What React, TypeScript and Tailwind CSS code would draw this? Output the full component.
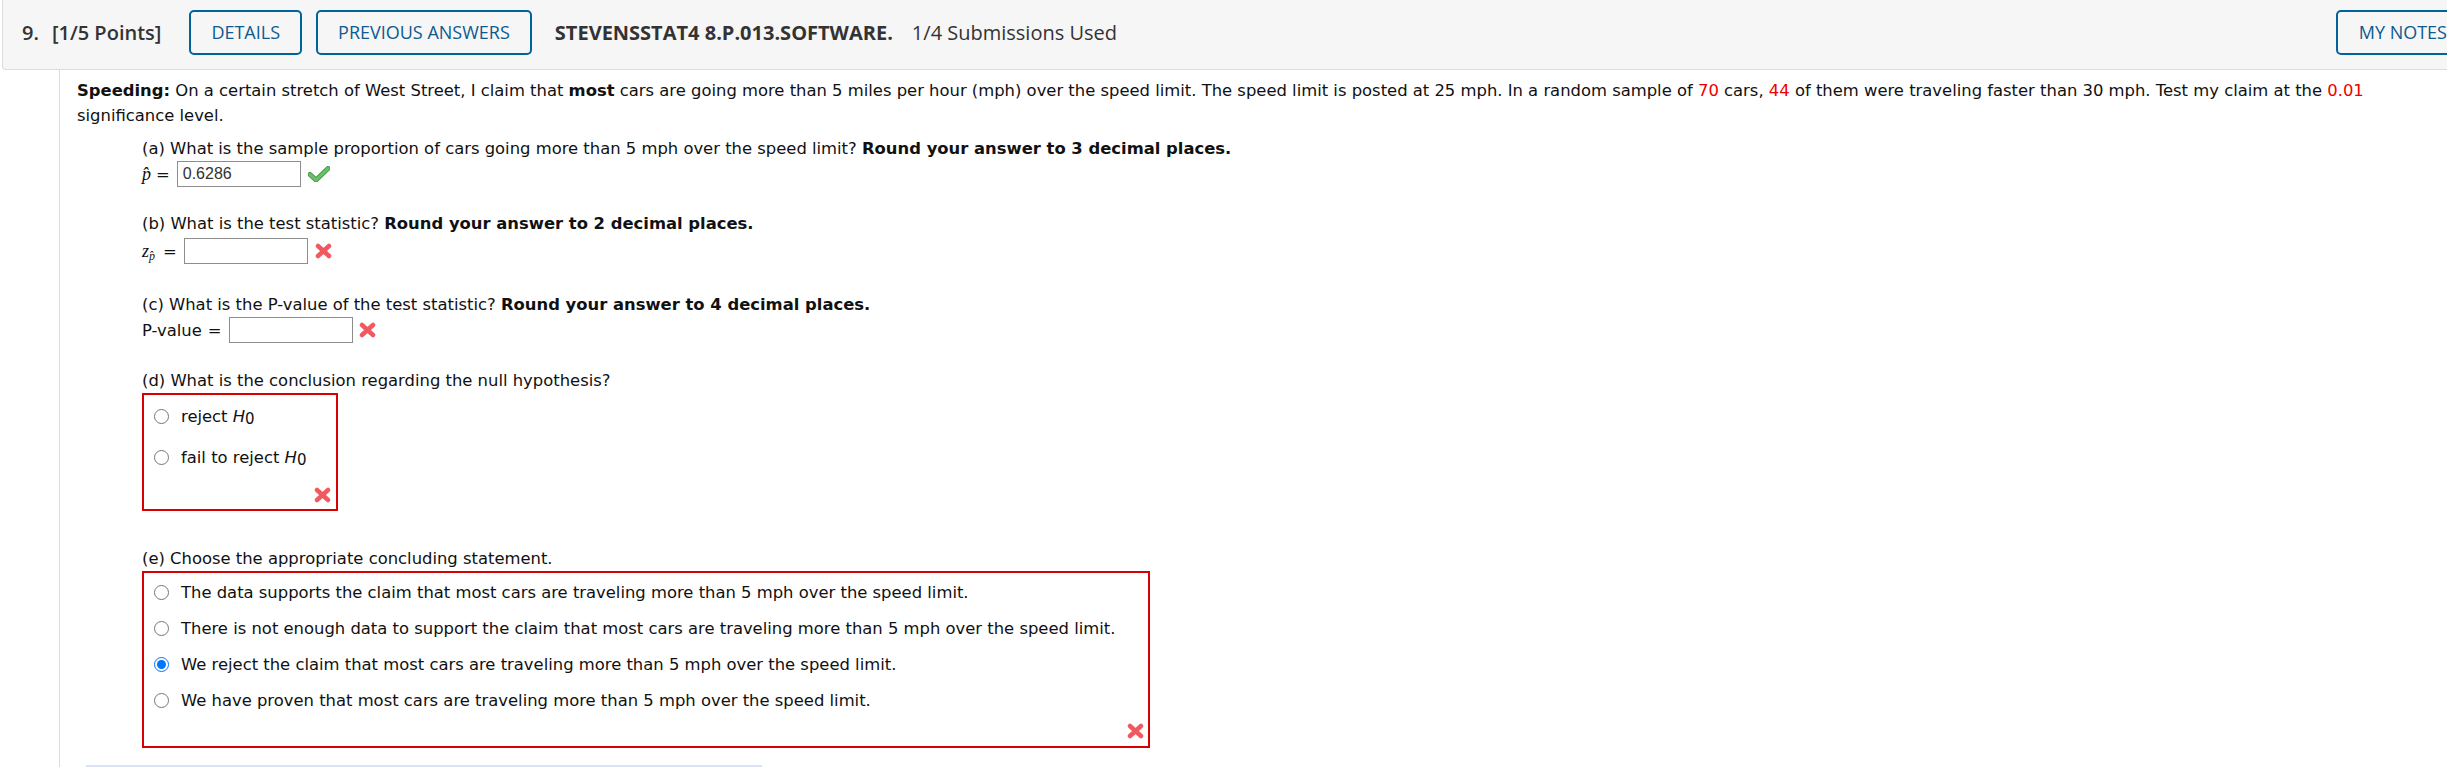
import React from "react";

const CheckMark = () => (
  <svg width="22" height="16" viewBox="0 0 22 16" className="ml-[7px]">
    <path d="M2 8.5 L8 14 L20 2.5" fill="none" stroke="#4e9a4e" strokeWidth="5" strokeLinecap="round" strokeLinejoin="round" />
    <path d="M2 8.5 L8 14 L20 2.5" fill="none" stroke="#6cc06c" strokeWidth="3" strokeLinecap="round" strokeLinejoin="round" />
  </svg>
);

const XMark = ({ className = "" }: { className?: string }) => (
  <svg width="17" height="16" viewBox="0 0 17 16" className={className}>
    <path d="M3 3 L14 13 M14 3 L3 13" fill="none" stroke="#f05a5f" strokeWidth="4.5" strokeLinecap="round" />
  </svg>
);

const H0 = () => (
  <span>
    <i>H</i>
    <sub className="text-[15px] relative top-[2px]">0</sub>
  </span>
);

const Radio = ({ name, checked }: { name: string; checked?: boolean }) => (
  <input
    type="radio"
    name={name}
    defaultChecked={checked}
    className="m-0 w-[15px] h-[15px] shrink-0"
  />
);

const AnswerBox = ({ w }: { w: string }) => (
  <div className={`${w} h-[26px] border border-[#8d8d8d] bg-white`} />
);

const App = () => {
  const statements = [
    "The data supports the claim that most cars are traveling more than 5 mph over the speed limit.",
    "There is not enough data to support the claim that most cars are traveling more than 5 mph over the speed limit.",
    "We reject the claim that most cars are traveling more than 5 mph over the speed limit.",
    "We have proven that most cars are traveling more than 5 mph over the speed limit.",
  ];

  return (
    <div className="w-full h-[767px] overflow-hidden bg-white">
      <div className="w-[2490px]">
        {/* question header */}
        <div
          className="ml-[2px] h-[70px] bg-[#f6f6f6] border-l border-b border-[#dcdcdc] rounded-bl-[4px] pl-[19px] pr-[20px] pt-[10px] text-[#333] text-[20px]"
          style={{ fontFamily: '"Open Sans", sans-serif' }}
        >
          <div className="flex items-center h-[45px]">
            <span className="font-semibold">9.</span>
            <span className="font-semibold ml-[13px]">[1/5 Points]</span>
            <button className="ml-[28px] h-[45px] px-[20px] border-2 border-[#00639c] rounded-[5px] text-[18px] text-[#0d5a90]">
              DETAILS
            </button>
            <button className="ml-[14px] h-[45px] px-[20px] border-2 border-[#00639c] rounded-[5px] text-[18px] text-[#0d5a90]">
              PREVIOUS ANSWERS
            </button>
            <span className="ml-[23px] font-bold">STEVENSSTAT4 8.P.013.SOFTWARE.</span>
            <span className="ml-[19px]">1/4 Submissions Used</span>
            <button className="ml-auto h-[45px] px-[21px] border-2 border-[#00639c] rounded-[5px] text-[18px] text-[#0d5a90]">
              MY NOTES
            </button>
          </div>
        </div>

        {/* question body */}
        <div
          className="ml-[59px] border-l border-[#dcdcdc] pl-[17px] pt-[8px] text-[16.4px] leading-[25px] text-[#111]"
          style={{ fontFamily: '"DejaVu Sans", Verdana, sans-serif' }}
        >
          <p className="w-[2330px]">
            <b>Speeding:</b> On a certain stretch of West Street, I claim that <b>most</b> cars are going more
            than 5 miles per hour (mph) over the speed limit. The speed limit is posted at 25 mph. In a
            random sample of <span className="text-[#ee0000]">70</span> cars,{" "}
            <span className="text-[#ee0000]">44</span> of them were traveling faster than 30 mph. Test my
            claim at the <span className="text-[#ee0000]">0.01</span> significance level.
          </p>

          <div className="ml-[65px]">
            {/* (a) */}
            <p className="mt-[8px]">
              (a) What is the sample proportion of cars going more than 5 mph over the speed limit?{" "}
              <b>Round your answer to 3 decimal places.</b>
            </p>
            <div className="flex items-center h-[26px]">
              <i className="text-[18px]" style={{ fontFamily: '"Liberation Serif", serif' }}>
                p̂
              </i>
              <span className="ml-[5px] mr-[7px]">=</span>
              <div
                className="w-[124px] h-[26px] border border-[#8d8d8d] pl-[5px] leading-[24px] text-[16px] text-[#333]"
                style={{ fontFamily: '"Liberation Sans", Arial, sans-serif' }}
              >
                0.6286
              </div>
              <CheckMark />
            </div>

            {/* (b) */}
            <p className="mt-[24px]">
              (b) What is the test statistic? <b>Round your answer to 2 decimal places.</b>
            </p>
            <div className="flex items-center h-[26px] mt-[2px]">
              <span style={{ fontFamily: '"Liberation Serif", serif' }} className="text-[18px]">
                <i>z</i>
                <sub className="text-[12px] italic">p̂</sub>
              </span>
              <span className="ml-[8px] mr-[7px]">=</span>
              <AnswerBox w="w-[124px]" />
              <XMark className="ml-[7px]" />
            </div>

            {/* (c) */}
            <p className="mt-[28px]">
              (c) What is the P-value of the test statistic? <b>Round your answer to 4 decimal places.</b>
            </p>
            <div className="flex items-center h-[26px]">
              <span>P-value</span>
              <span className="ml-[6px] mr-[7px]">=</span>
              <AnswerBox w="w-[124px]" />
              <XMark className="ml-[6px]" />
            </div>

            {/* (d) */}
            <p className="mt-[26px] leading-[24px]">(d) What is the conclusion regarding the null hypothesis?</p>
            <div className="w-[196px] h-[118px] border-2 border-[#d80000] pt-[6px] pl-[10px] pr-[5px] flex flex-col">
              <label className="flex items-center gap-[12px] h-[30px]">
                <Radio name="d" />
                <span>
                  reject <H0 />
                </span>
              </label>
              <label className="flex items-center gap-[12px] h-[30px] mt-[11px]">
                <Radio name="d" />
                <span>
                  fail to reject <H0 />
                </span>
              </label>
              <div className="flex justify-end mt-auto mb-[6px]">
                <XMark />
              </div>
            </div>

            {/* (e) */}
            <p className="mt-[35px] leading-[25px]">(e) Choose the appropriate concluding statement.</p>
            <div className="w-[1008px] h-[177px] border-2 border-[#d80000] pt-[6px] pl-[10px] pr-[4px] flex flex-col gap-[10px]">
              {statements.map((s, i) => (
                <label key={i} className="flex items-center gap-[12px] h-[26px]">
                  <Radio name="e" checked={i === 2} />
                  <span>{s}</span>
                </label>
              ))}
              <div className="flex justify-end mt-auto mb-[7px]">
                <XMark />
              </div>
            </div>
          </div>

          <div className="ml-[9px] mt-[17px] w-[676px] h-[12px] bg-[#dbe4f7]" />
        </div>
      </div>
    </div>
  );
};

export default App;
